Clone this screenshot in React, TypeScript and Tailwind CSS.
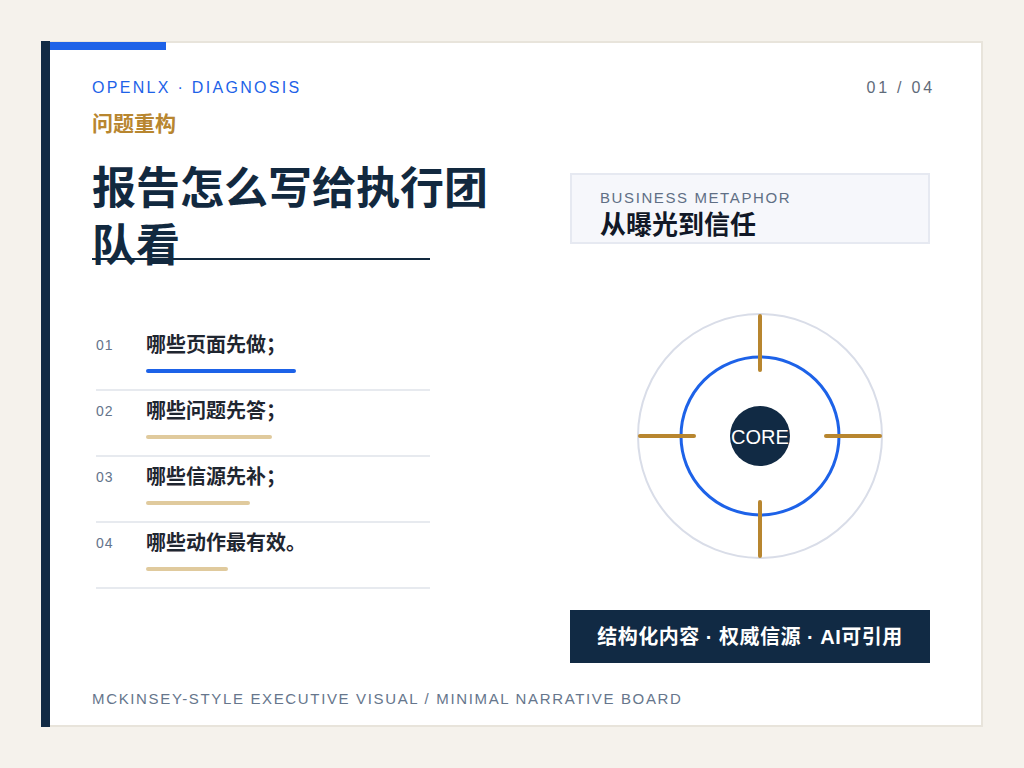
import React from "react";

const items = [
  { n: "01", t: "哪些页面先做；", w: 150, c: "bg-[#1d62e8]" },
  { n: "02", t: "哪些问题先答；", w: 126, c: "bg-[#e0ca9d]" },
  { n: "03", t: "哪些信源先补；", w: 104, c: "bg-[#e0ca9d]" },
  { n: "04", t: "哪些动作最有效。", w: 82, c: "bg-[#e0ca9d]" },
];

function Target() {
  return (
    <svg width="250" height="250" viewBox="0 0 250 250" className="block">
      <circle cx="125" cy="125" r="122" fill="none" stroke="#d9dde8" strokeWidth="2" />
      <circle cx="125" cy="125" r="79" fill="none" stroke="#1d62e8" strokeWidth="3" />
      <g stroke="#b8862f" strokeWidth="4" strokeLinecap="round">
        <line x1="125" y1="5" x2="125" y2="59" />
        <line x1="125" y1="191" x2="125" y2="245" />
        <line x1="5" y1="125" x2="59" y2="125" />
        <line x1="191" y1="125" x2="245" y2="125" />
      </g>
      <circle cx="125" cy="125" r="30" fill="#112a44" />
      <text
        x="125"
        y="126"
        textAnchor="middle"
        dominantBaseline="central"
        fill="#ffffff"
        fontSize="20"
        fontFamily="'Liberation Sans', Arial, sans-serif"
      >
        CORE
      </text>
    </svg>
  );
}

export default function App() {
  return (
    <div
      className="w-full h-[768px] bg-[#f5f2ec] p-[41px]"
      style={{ fontFamily: "'Liberation Sans', 'Noto Sans CJK SC', sans-serif" }}
    >
      <div className="h-full flex bg-white border-2 border-l-0 border-[#e8e4db]">
        <div className="w-[9px] bg-[#112a44] -my-[2px] shrink-0" />
        <div className="flex-1 flex flex-col">
          <div className="w-[116px] h-[8px] -mt-[1px] bg-[#1d62e8] shrink-0" />
          <div className="flex-1 flex flex-col pl-[42px] pr-[49px] pt-[28px]">
            {/* header */}
            <div className="flex justify-between items-start">
              <div>
                <div className="text-[16px] leading-[20px] tracking-[2.3px] text-[#1d62e8]">
                  OPENLX · DIAGNOSIS
                </div>
                <div className="mt-[12px] text-[21px] leading-[28px] font-semibold text-[#b8862f]">
                  问题重构
                </div>
              </div>
              <div className="text-[16px] leading-[20px] tracking-[2.8px] -mr-[3px] text-[#5f6b7a]">
                01 / 04
              </div>
            </div>

            {/* main row */}
            <div className="mt-[22px] flex justify-between items-start">
              <div className="w-[338px]">
                <h1 className="w-[420px] text-[44px] leading-[57px] font-bold text-[#12293f]">
                  报告怎么写给执行团队看
                </h1>
                <div className="h-[2px] -mt-[16px] bg-[#12293f]" />
                <div className="mt-[65px] ml-[4px]">
                  {items.map((it) => (
                    <div key={it.n} className="pt-[6px] pb-[16px] border-b-2 border-[#e7eaef]">
                      <div className="flex items-center">
                        <div className="w-[50px] text-[14px] tracking-[1px] text-[#64748b]">{it.n}</div>
                        <div className="text-[20px] leading-[28px] font-semibold text-[#1f2630]">{it.t}</div>
                      </div>
                      <div
                        className={`ml-[50px] mt-[10px] h-[4px] rounded-full ${it.c}`}
                        style={{ width: it.w }}
                      />
                    </div>
                  ))}
                </div>
              </div>

              <div className="w-[360px] mr-[2px] mt-[13px] flex flex-col">
                <div className="h-[71px] border-2 border-[#e6e9f1] bg-[#f6f7fb] pl-[28px] pt-[14px]">
                  <div className="text-[15px] leading-[18px] tracking-[1.6px] text-[#5f6f85]">
                    BUSINESS METAPHOR
                  </div>
                  <div className="mt-[2px] text-[26px] leading-[32px] font-bold text-[#111827]">
                    从曝光到信任
                  </div>
                </div>
                <div className="mt-[67px] ml-[65px]">
                  <Target />
                </div>
                <div className="mt-[49px] h-[53px] bg-[#112a44] flex items-center justify-center text-[20px] font-semibold tracking-[0.5px] text-white">
                  结构化内容 · 权威信源 · AI可引用
                </div>
              </div>
            </div>

            {/* footer */}
            <div className="mt-auto pb-[16px] text-[15px] leading-[20px] tracking-[1.65px] text-[#66768c]">
              MCKINSEY-STYLE EXECUTIVE VISUAL / MINIMAL NARRATIVE BOARD
            </div>
          </div>
        </div>
      </div>
    </div>
  );
}
